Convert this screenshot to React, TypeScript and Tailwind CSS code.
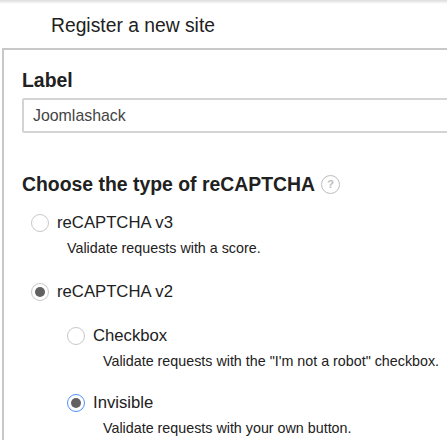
const Radio = ({ checked, focused }: { checked?: boolean; focused?: boolean }) => (
  <span
    className={`flex h-[18px] w-[18px] shrink-0 items-center justify-center rounded-full border bg-white ${
      focused ? "border-[#4d90fe]" : "border-[#c8c8c8]"
    }`}
  >
    {checked && <span className="h-[10px] w-[10px] rounded-full bg-[#616161]" />}
  </span>
);

const Option = ({
  label,
  hint,
  checked,
  focused,
  className,
}: {
  label: string;
  hint?: string;
  checked?: boolean;
  focused?: boolean;
  className?: string;
}) => (
  <div className={className}>
    <div className="flex h-[20px] items-center gap-[8px]">
      <Radio checked={checked} focused={focused} />
      <span className="text-[16.7px] text-[#212121]">{label}</span>
    </div>
    {hint && <p className="mt-[6px] pl-[36px] text-[14.3px] leading-[18px] text-[#212121]">{hint}</p>}
  </div>
);

export default function App() {
  return (
    <div className="relative h-[440px] w-[447px] overflow-hidden bg-white font-['Liberation_Sans',sans-serif]">
      <div className="absolute inset-x-0 top-0 h-[4px] bg-gradient-to-b from-[#dcdcdc] to-white" />
      <h1 className="pl-[51px] pt-[15px] text-[19.3px] leading-[21px] text-[#212121]">Register a new site</h1>
      <div className="ml-[2px] mt-[12px] h-[460px] w-[600px] border-l-2 border-t-2 border-[#c8c8c8] pl-[18px] pt-[19px]">
        <h2 className="text-[19.4px] font-bold leading-[22px] text-[#212121]">Label</h2>
        <div className="mt-[7px] flex h-[35px] w-[560px] items-center rounded-[2px] border-2 border-[#d4d4d4] px-[9px] text-[15.9px] text-[#444444]">
          Joomlashack
        </div>
        <div className="mt-[40px] flex items-center gap-[6px]">
          <h2 className="text-[19.4px] font-bold leading-[22px] text-[#212121]">
            Choose the type of reCAPTCHA
          </h2>
          <span className="flex h-[19px] w-[19px] items-center justify-center rounded-full border border-[#bdbdbd] text-[11px] font-bold text-[#bdbdbd]">
            ?
          </span>
        </div>
        <Option className="ml-[9px] mt-[18px]" label="reCAPTCHA v3" hint="Validate requests with a score." />
        <Option className="ml-[9px] mt-[25px]" label="reCAPTCHA v2" checked />
        <Option
          className="ml-[45px] mt-[24px]"
          label="Checkbox"
          hint={'Validate requests with the "I\'m not a robot" checkbox.'}
        />
        <Option className="ml-[45px] mt-[23px]" label="Invisible" hint="Validate requests with your own button." checked focused />
      </div>
    </div>
  );
}
